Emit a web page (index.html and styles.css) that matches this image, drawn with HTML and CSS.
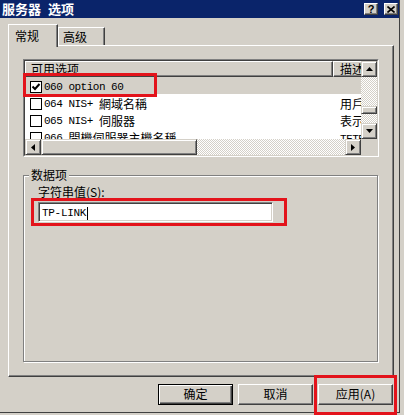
FILE: index.html
```html
<!DOCTYPE html>
<html lang="zh-CN">
<head>
<meta charset="utf-8">
<title>服务器 选项</title>
<link rel="stylesheet" href="styles.css">
</head>
<body>
<div class="win">
  <div class="title">
    <span class="title-text">服务器&nbsp;选项</span>
    <div class="tbtns">
      <span class="tb q">?</span>
      <span class="tb"><svg width="8" height="7" viewBox="0 0 8 7"><path d="M0.5 0.5 L7.5 6.5 M7.5 0.5 L0.5 6.5" stroke="#000" stroke-width="1.6"/></svg></span>
    </div>
  </div>

  <div class="tabs">
    <div class="tab active">常规</div>
    <div class="tab">高级</div>
  </div>

  <div class="panel">
    <div class="lv">
      <div class="lv-in">
        <div class="lv-content">
          <div class="lv-head">
            <div class="hcell c1">可用选项</div>
            <div class="hcell c2">描述</div>
          </div>
          <div class="row sel">
            <div class="c1"><span class="cb checked"><svg width="10" height="10" viewBox="0 0 10 10"><path d="M1.5 4.5 L4 7 L8.5 2" fill="none" stroke="#000" stroke-width="2"/></svg></span><span class="en">060 option 60</span></div>
            <div class="c2"></div>
          </div>
          <div class="row">
            <div class="c1"><span class="cb"></span><span class="en">064 NIS+ </span>網域名稱</div>
            <div class="c2">用戶</div>
          </div>
          <div class="row">
            <div class="c1"><span class="cb"></span><span class="en">065 NIS+ </span>伺服器</div>
            <div class="c2">表示</div>
          </div>
          <div class="row">
            <div class="c1"><span class="cb"></span><span class="en">066 </span>開機伺服器主機名稱</div>
            <div class="c2"><span class="en">TFTP</span></div>
          </div>
        </div>
        <div class="vscroll">
          <div class="sbtn"><svg width="7" height="4" viewBox="0 0 7 4"><path d="M3.5 0 L7 4 L0 4 Z"/></svg></div>
          <div class="track v1"></div>
          <div class="thumb vthumb"></div>
          <div class="track v2"></div>
          <div class="sbtn"><svg width="7" height="4" viewBox="0 0 7 4"><path d="M0 0 L7 0 L3.5 4 Z"/></svg></div>
        </div>
        <div class="hscroll">
          <div class="sbtn"><svg width="4" height="7" viewBox="0 0 4 7"><path d="M0 3.5 L4 0 L4 7 Z"/></svg></div>
          <div class="thumb hthumb"></div>
          <div class="track h1"></div>
          <div class="sbtn"><svg width="4" height="7" viewBox="0 0 4 7"><path d="M0 0 L4 3.5 L0 7 Z"/></svg></div>
        </div>
        <div class="corner"></div>
      </div>
    </div>

    <div class="group">
      <span class="legend">数据项</span>
      <div class="field-label">字符串值(S):</div>
      <div class="input"><span class="en val">TP-LINK</span><span class="caret"></span></div>
    </div>
  </div>

  <div class="btns">
    <div class="btn def">确定</div>
    <div class="btn">取消</div>
    <div class="btn">应用(A)</div>
  </div>

  <div class="mark m1"></div>
  <div class="mark m2"></div>
  <div class="mark m3"></div>
</div>
</body>
</html>
```
FILE: styles.css
```css
* { box-sizing: border-box; }
html, body { margin: 0; padding: 0; }
body {
  width: 404px;
  height: 415px;
  overflow: hidden;
  background: #d4d0c8;
  font: 12px/14px "Noto Sans CJK SC", sans-serif;
  color: #000;
}
.win {
  position: relative;
  width: 400px;
  height: 413px;
  background: #d4d0c8;
  border-right: 1px solid #404040;
  border-bottom: 1px solid #404040;
  display: flex;
  flex-direction: column;
}
.title {
  height: 18px;
  flex: none;
  background: #0a246a;
  color: #fff;
  display: flex;
  align-items: center;
  justify-content: space-between;
  padding: 0 1px 0 2px;
}
.title-text {
  font: bold 13px/18px "Noto Sans CJK SC", sans-serif;
  word-spacing: 4px;
}
.tbtns { display: flex; gap: 6px; }
.tb {
  width: 14px;
  height: 12px;
  background: #d4d0c8;
  border: 1px solid;
  border-color: #fff #404040 #404040 #fff;
  box-shadow: inset -1px -1px #808080;
  display: flex;
  align-items: center;
  justify-content: center;
}
.tb.q {
  font: bold 11px/10px "Liberation Sans", sans-serif;
  color: #000;
}

.tabs {
  margin-top: 6px;
  padding-left: 8px;
  height: 21px;
  flex: none;
  display: flex;
  align-items: flex-end;
  position: relative;
  z-index: 1;
}
.tab {
  width: 47px;
  height: 18px;
  background: #d4d0c8;
  border-top: 1px solid #fff;
  border-left: 1px solid #fff;
  border-right: 1px solid #404040;
  box-shadow: inset -1px 0 #808080;
  padding: 3px 0 0 4px;
  line-height: 12px;
}
.tab.active {
  width: 50px;
  height: 23px;
  margin-bottom: -2px;
  padding: 5px 0 0 6px;
}

.panel {
  margin-left: 8px;
  width: 386px;
  height: 332px;
  flex: none;
  border-top: 1px solid #fff;
  border-left: 1px solid #fff;
  border-right: 1px solid #404040;
  border-bottom: 1px solid #404040;
  box-shadow: inset -1px -1px #808080;
  padding: 13px 0 0 14px;
}

.lv {
  width: 356px;
  height: 98px;
  border: 1px solid;
  border-color: #808080 #fff #fff #808080;
}
.lv-in {
  width: 100%;
  height: 100%;
  border: 1px solid;
  border-color: #404040 #d4d0c8 #d4d0c8 #404040;
  display: grid;
  grid-template-columns: 336px 16px;
  grid-template-rows: 78px 16px;
  background: #fff;
}
.lv-content {
  overflow: hidden;
  background: #fff;
}
.lv-head {
  display: flex;
  height: 16px;
}
.hcell {
  height: 16px;
  background: #d4d0c8;
  border-top: 1px solid #fff;
  border-left: 1px solid #fff;
  border-right: 1px solid #404040;
  border-bottom: 1px solid #404040;
  box-shadow: inset -1px -1px #808080;
  white-space: nowrap;
  overflow: hidden;
  line-height: 13px;
}
.hcell.c1 { width: 308px; flex: none; padding-left: 5px; }
.hcell.c2 { width: 40px; flex: none; padding-left: 6px; }
.row {
  display: flex;
  height: 17px;
  align-items: center;
  white-space: nowrap;
  padding-top: 2px;
}
.row.sel { background: #d4d0c8; }
.row .c1 {
  width: 308px;
  flex: none;
  display: flex;
  align-items: center;
  padding-left: 5px;
}
.row .c2 {
  flex: none;
  width: 40px;
  padding-left: 7px;
}
.cb {
  width: 12px;
  height: 12px;
  flex: none;
  border: 1px solid #000;
  background: #fff;
  margin-right: 2px;
  display: flex;
  align-items: center;
  justify-content: center;
}
.en {
  font: 11px/14px "Liberation Mono", monospace;
  letter-spacing: -0.5px;
  white-space: pre;
}

.sbtn {
  width: 16px;
  height: 16px;
  flex: none;
  background: #d4d0c8;
  border: 1px solid;
  border-color: #d4d0c8 #404040 #404040 #d4d0c8;
  box-shadow: inset 1px 1px #fff, inset -1px -1px #808080;
  display: flex;
  align-items: center;
  justify-content: center;
}
.sbtn svg path { fill: #000; }
.track {
  background: repeating-conic-gradient(#fff 0 25%, #d4d0c8 0 50%) 0 0 / 2px 2px;
}
.thumb {
  background: #d4d0c8;
  border: 1px solid;
  border-color: #d4d0c8 #404040 #404040 #d4d0c8;
  box-shadow: inset 1px 1px #fff, inset -1px -1px #808080;
}
.vscroll {
  display: flex;
  flex-direction: column;
}
.v1 { height: 29px; }
.vthumb { height: 8px; flex: none; }
.v2 { flex: 1; }
.hscroll {
  display: flex;
}
.hthumb { width: 156px; flex: none; }
.h1 { flex: 1; }
.corner { background: #d4d0c8; }

.group {
  margin-top: 18px;
  width: 355px;
  height: 187px;
  border: 1px solid #808080;
  box-shadow: 1px 1px 0 #fff, inset 1px 1px 0 #fff;
  padding-left: 14px;
  display: flex;
  flex-direction: column;
  align-items: flex-start;
}
.legend {
  margin: -8px 0 0 -9px;
  padding: 0 2px;
  background: #d4d0c8;
  line-height: 14px;
}
.field-label {
  margin-top: 3px;
  line-height: 14px;
}
.input {
  margin-top: 3px;
  width: 235px;
  height: 20px;
  background: #fff;
  border: 1px solid;
  border-color: #808080 #fff #fff #808080;
  box-shadow: inset 1px 1px #404040, inset -1px -1px #d4d0c8;
  padding: 2px 0 0 3px;
  display: flex;
  align-items: center;
}
.input .val {
  letter-spacing: -0.3px;
}
.caret {
  width: 1px;
  height: 13px;
  background: #000;
  margin-left: 1px;
}

.btns {
  margin-top: 7px;
  display: flex;
  justify-content: flex-end;
  gap: 5px;
  padding-right: 6px;
}
.btn {
  width: 75px;
  height: 21px;
  background: #d4d0c8;
  border: 1px solid;
  border-color: #fff #404040 #404040 #fff;
  box-shadow: inset -1px -1px #808080;
  text-align: center;
  line-height: 18px;
}
.btn.def {
  border-color: #000;
  box-shadow: inset 1px 1px #fff, inset -1px -1px #404040, inset -2px -2px #808080;
}

.mark {
  position: absolute;
  border: 3px solid #e3131b;
}
.m1 { left: 23px; top: 73px; width: 134px; height: 24px; }
.m2 { left: 31px; top: 198px; width: 256px; height: 28px; }
.m3 { left: 314px; top: 375px; width: 83px; height: 40px; }
```
